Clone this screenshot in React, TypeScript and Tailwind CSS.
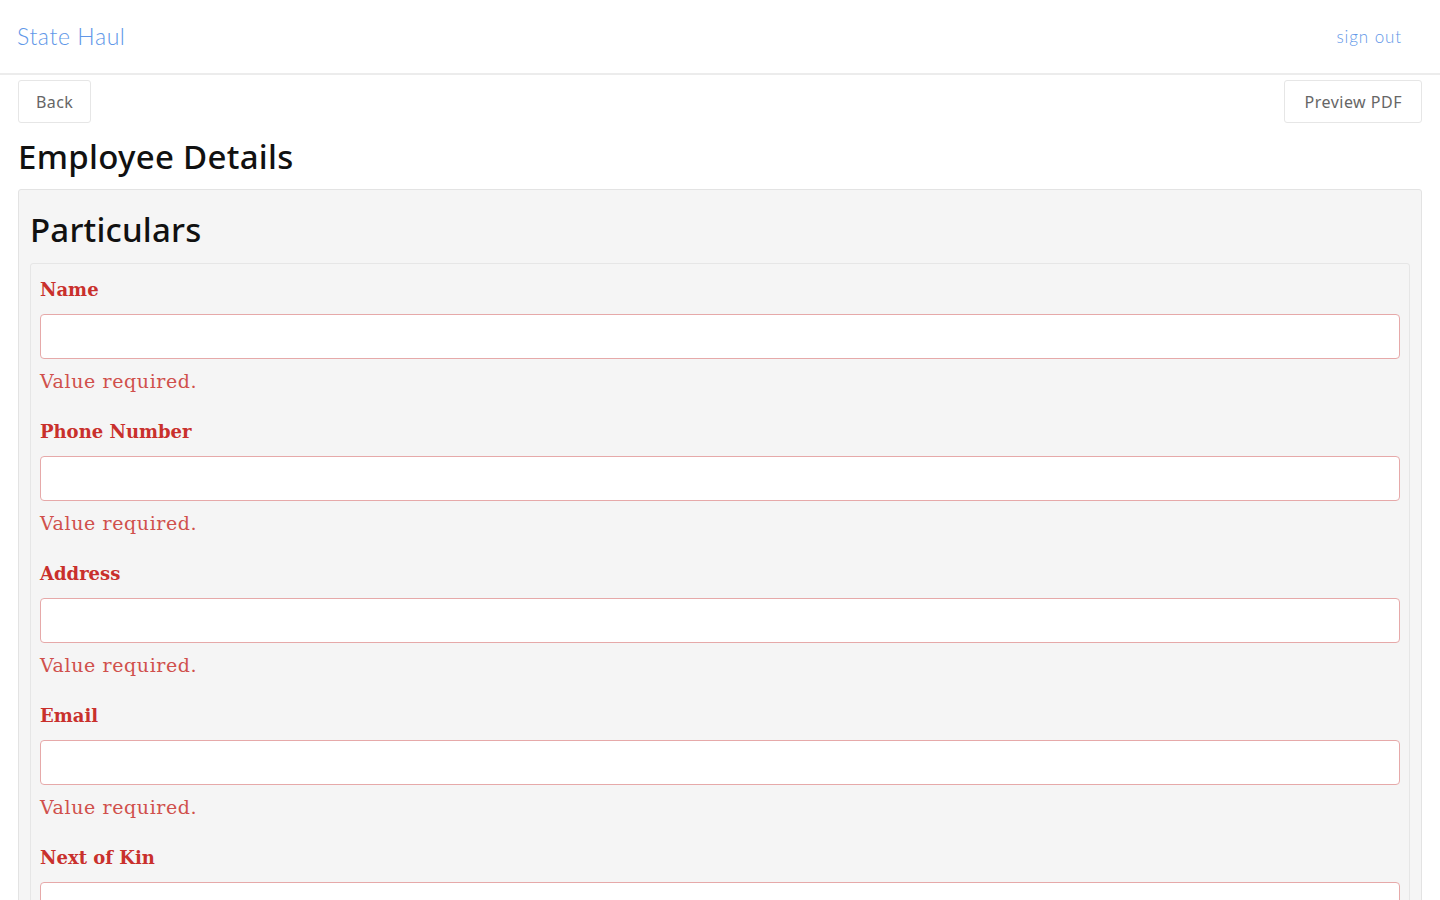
const FIELDS = ["Name", "Phone Number", "Address", "Email", "Next of Kin", "Emergency Contact"];

function Field({ label }: { label: string }) {
  return (
    <div className="mb-[25px]">
      <label className="block h-6 text-[18px] font-bold leading-6 text-[#c9302c] [font-family:'DejaVu_Serif',serif]">
        {label}
      </label>
      <input
        type="text"
        className="mt-3 block h-[45px] w-full rounded-[4px] border border-[#e6a9a9] bg-white px-3 outline-none"
      />
      <p className="mt-2 h-7 text-[19px] leading-7 tracking-[0.6px] text-[#d0504c] [font-family:'DejaVu_Serif',serif]">
        Value required.
      </p>
    </div>
  );
}

export default function App() {
  return (
    <div className="min-h-screen bg-white text-[#111] [font-family:'Noto_Sans',Lato,sans-serif]">
      <header className="flex h-[75px] items-center justify-between border-b-2 border-[#ececec] pl-[17px] pr-[38px]">
        <a href="#" className="text-[23px] font-light tracking-[0.6px] text-[#6197e8] [font-family:Lato,sans-serif]">
          State Haul
        </a>
        <a href="#" className="text-[17px] font-light tracking-[0.9px] text-[#6197e8] [font-family:Lato,sans-serif]">
          sign out
        </a>
      </header>

      <main className="px-[18px] pt-[5px]">
        <div className="flex items-center justify-between">
          <button className="h-[43px] rounded-[3px] border border-[#e6e6e6] bg-white px-[17px] text-[16px] tracking-[0.4px] text-[#666]">
            Back
          </button>
          <button className="h-[43px] rounded-[3px] border border-[#e6e6e6] bg-white px-[19px] text-[16px] tracking-[0.5px] text-[#666]">
            Preview PDF
          </button>
        </div>

        <h1 className="mt-[14px] text-[33px] font-medium leading-10 tracking-[0.3px]">Employee Details</h1>

        <section className="mt-[12px] rounded-[3px] border border-[#e3e3e3] bg-[#f5f5f5] px-[11px] pt-[20px]">
          <h2 className="text-[33px] font-medium leading-10 tracking-[0.2px]">Particulars</h2>
          <div className="mt-[13px] rounded-[3px] border border-[#e6e6e6] bg-[#f5f5f5] px-[9px] pt-[14px]">
            {FIELDS.map((f) => (
              <Field key={f} label={f} />
            ))}
          </div>
        </section>
      </main>
    </div>
  );
}
